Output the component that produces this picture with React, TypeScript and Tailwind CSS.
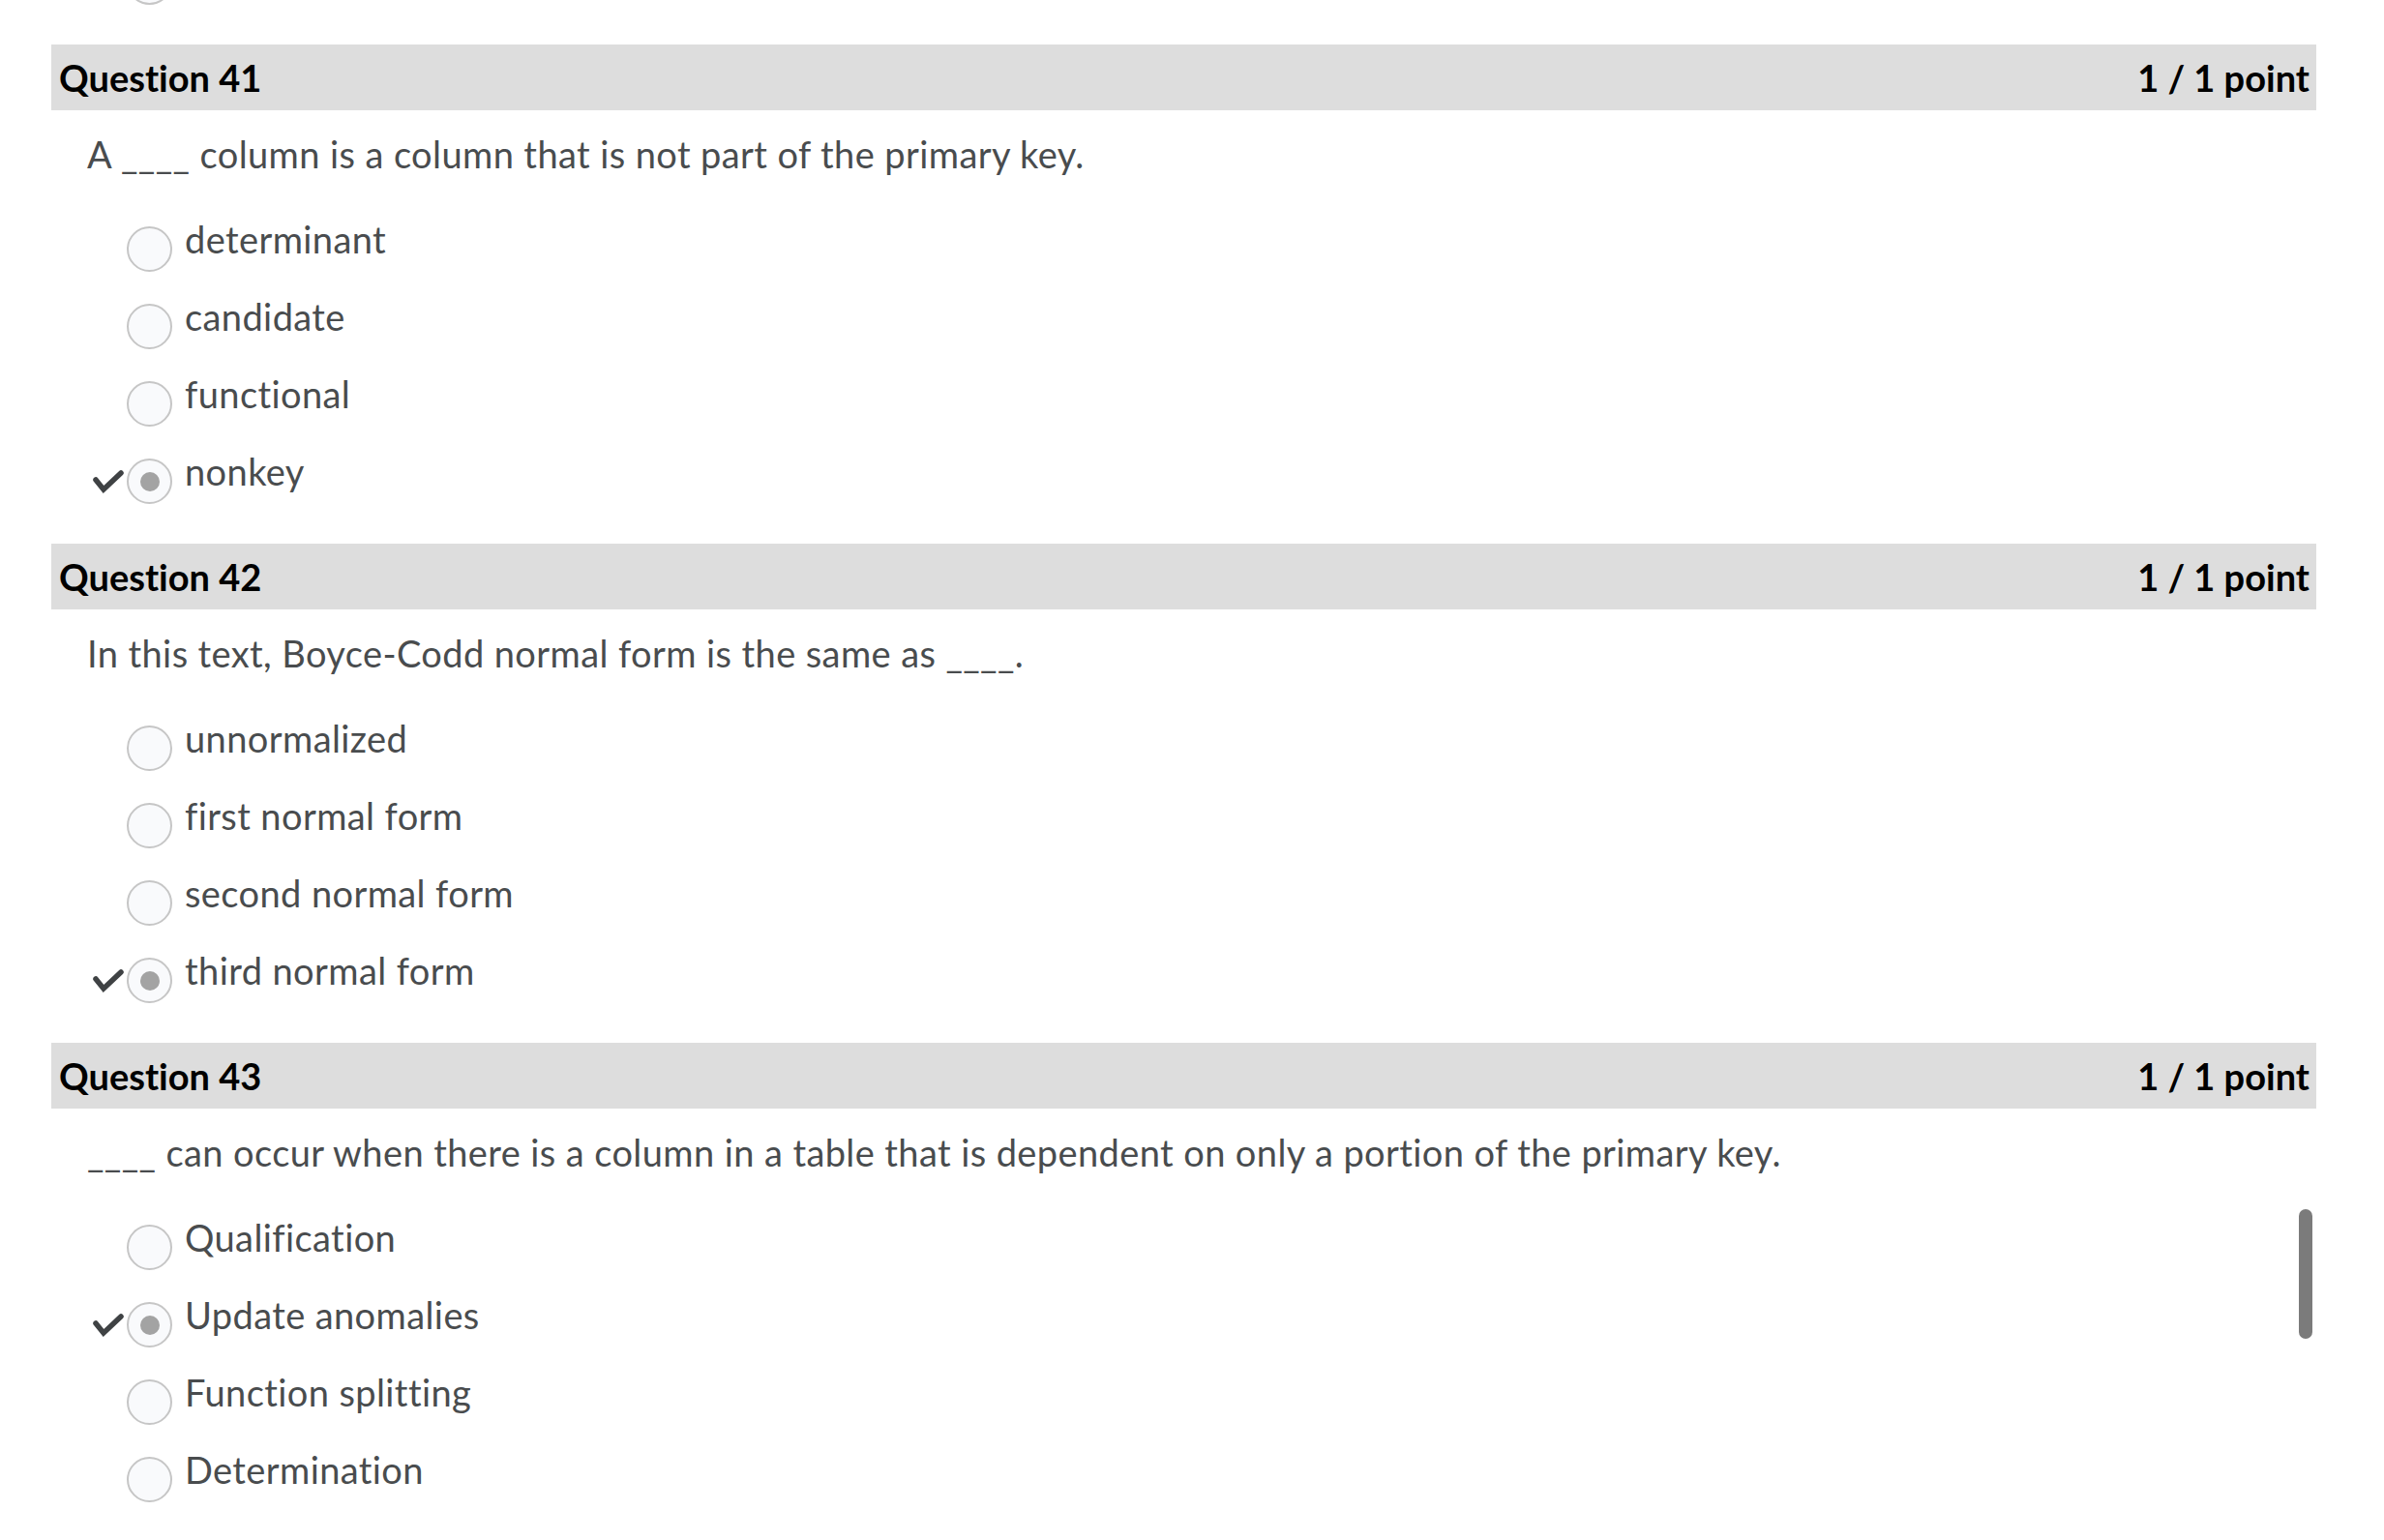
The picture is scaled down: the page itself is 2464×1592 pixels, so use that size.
import React from 'react';

type Question = {
  number: number;
  text: string;
  options: string[];
  selected: number;
};

const questions: Question[] = [
  {
    number: 41,
    text: 'A ____ column is a column that is not part of the primary key.',
    options: ['determinant', 'candidate', 'functional', 'nonkey'],
    selected: 3,
  },
  {
    number: 42,
    text: 'In this text, Boyce-Codd normal form is the same as ____.',
    options: ['unnormalized', 'first normal form', 'second normal form', 'third normal form'],
    selected: 3,
  },
  {
    number: 43,
    text: '____ can occur when there is a column in a table that is dependent on only a portion of the primary key.',
    options: ['Qualification', 'Update anomalies', 'Function splitting', 'Determination'],
    selected: 1,
  },
];

const Radio: React.FC<{ checked?: boolean }> = ({ checked }) => (
  <div className="w-[47px] h-[47px] shrink-0 rounded-full border-2 border-[#c6c6c6] bg-[#f9fafc] flex items-center justify-center">
    {checked && <div className="w-[20px] h-[20px] rounded-full bg-[#a3a3a3]" />}
  </div>
);

const Check: React.FC = () => (
  <svg width="32" height="26" viewBox="0 0 32 26" fill="none">
    <path d="M3 11 L11 21 L29 4" stroke="#3f4244" strokeWidth="5.5" strokeLinejoin="miter" strokeLinecap="round" />
  </svg>
);

const QuestionBlock: React.FC<{ q: Question }> = ({ q }) => (
  <div className="mb-[41px]">
    <div className="h-[68px] bg-[#dddddd] flex items-center justify-between pl-[8px] pr-[7px] text-[38px] font-bold text-black">
      <span>Question {q.number}</span>
      <span>1 / 1 point</span>
    </div>
    <p className="mt-[22px] pl-[37px] text-[38px] leading-[46px] tracking-[0.4px] text-[#494c4e]">{q.text}</p>
    <div className="mt-[42px] flex flex-col gap-[23px]">
      {q.options.map((opt, i) => (
        <div key={opt} className="flex items-start pl-[43px] h-[57px]">
          <div className="w-[35px] h-[47px] mt-[10px] flex items-center">
            {i === q.selected && <Check />}
          </div>
          <div className="mt-[10px]">
            <Radio checked={i === q.selected} />
          </div>
          <span className="ml-[13px] text-[38px] leading-[46px] tracking-[0.4px] text-[#494c4e]">{opt}</span>
        </div>
      ))}
    </div>
  </div>
);

export default function App() {
  return (
    <div className="relative h-[1592px] overflow-hidden bg-white font-['Lato','Liberation_Sans',sans-serif] [font-variant-ligatures:none]">
      <div className="pl-[53px] pr-[70px]">
        <div className="h-[46px] overflow-hidden">
          <div className="-mt-[42px] ml-[78px]">
            <Radio />
          </div>
        </div>
        {questions.map((q) => (
          <QuestionBlock key={q.number} q={q} />
        ))}
      </div>
      <div className="absolute left-[2376px] top-[1250px] w-[14px] h-[134px] rounded-full bg-[#7b7b7b]" />
    </div>
  );
}
